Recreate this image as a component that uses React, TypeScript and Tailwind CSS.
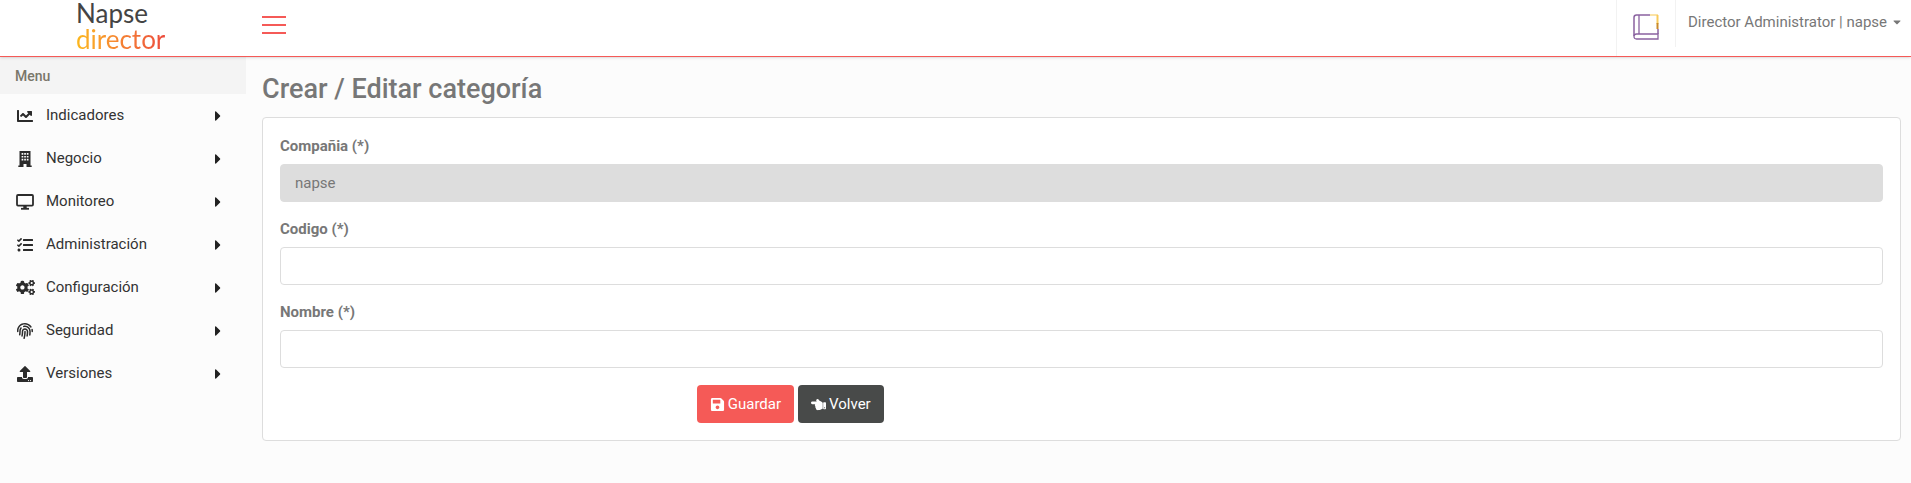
import React from 'react';
import {
    FaCaretDown,
    FaCaretRight,
    FaChartLine,
    FaCogs,
    FaFingerprint,
    FaHandPointLeft,
    FaSave,
    FaTasks,
    FaUpload,
} from 'react-icons/fa';

const BuildingIcon = () => (
    <svg width="14" height="16" viewBox="0 0 14 16" fill="currentColor">
        <path
            fillRule="evenodd"
            d="M1.5 0h11v14.5h1.2V16H8.5v-3h-3v3H.3v-1.5h1.2zM3.6 2v1.7h1.7V2zm2.6 0v1.7h1.7V2zm2.6 0v1.7h1.7V2zM3.6 4.9v1.7h1.7V4.9zm2.6 0v1.7h1.7V4.9zm2.6 0v1.7h1.7V4.9zM3.6 7.8v1.7h1.7V7.8zm2.6 0v1.7h1.7V7.8zm2.6 0v1.7h1.7V7.8z"
        />
    </svg>
);

const MonitorIcon = () => (
    <svg width="18" height="16" viewBox="0 0 18 16" fill="none" stroke="currentColor" strokeWidth="1.8">
        <rect x="1" y="1" width="16" height="10.6" rx="1" />
        <path d="M9 12v2.4" strokeWidth="3.4" />
        <path d="M5 14.8h8" />
    </svg>
);

const BookIcon = () => (
    <svg width="26" height="26" viewBox="0 0 26 26" fill="none">
        <path d="M17 1H3.5Q1 1 1 3.5V22" stroke="#8a62a0" strokeWidth="1.5" />
        <path d="M6 1V20M3.5 20H25V25H3.5Q1 25 1 22.5T3.5 20Z" stroke="#8a62a0" strokeWidth="1.3" />
        <path d="M25 15V20" stroke="#8a62a0" strokeWidth="1.5" />
        <path d="M17 1H25" stroke="#fbe3a6" strokeWidth="2" />
        <path d="M24.5 1V10" stroke="#f8cb5c" strokeWidth="2" />
        <path d="M24.5 9V15" stroke="#c98a2b" strokeWidth="2" />
    </svg>
);

const menuItems = [
    { label: 'Indicadores', icon: <FaChartLine size={16} /> },
    { label: 'Negocio', icon: <BuildingIcon /> },
    { label: 'Monitoreo', icon: <MonitorIcon /> },
    { label: 'Administración', icon: <FaTasks size={16} /> },
    { label: 'Configuración', icon: <FaCogs size={19} /> },
    { label: 'Seguridad', icon: <FaFingerprint size={16} /> },
    { label: 'Versiones', icon: <FaUpload size={16} /> },
];

const Header = () => (
    <header className="relative flex h-[57px] border-b border-[#f55a57] bg-white shadow">
        <a href="#" className="flex w-[246px] shrink-0 flex-col pl-[76px] font-['Lato',sans-serif] text-[26px] leading-[26px]">
            <span className="text-[#444]">Napse</span>
            <span className="w-fit bg-linear-to-r from-[#fcb81c] via-[#f58232] to-[#ec4a3c] bg-clip-text text-transparent">
                director
            </span>
        </a>
        <button type="button" aria-label="Menu" className="ml-4 flex h-[50px] w-6 flex-col justify-center gap-1.5">
            <span className="h-0.5 w-full bg-[#f55a57]" />
            <span className="h-0.5 w-full bg-[#f55a57]" />
            <span className="h-0.5 w-full bg-[#f55a57]" />
        </button>
        <div className="ml-auto flex border-l border-[#f2f2f2]">
            <a href="#" aria-label="Manual" className="flex h-[47px] w-[59px] justify-center border-r border-[#f2f2f2] pt-3.5">
                <BookIcon />
            </a>
            <button type="button" className="flex h-11 items-center gap-1 pr-2 pl-3 text-[15px] text-[#777]">
                Director Administrator | napse
                <FaCaretDown size={12} />
            </button>
        </div>
    </header>
);

const Sidebar = () => (
    <nav className="w-[246px] shrink-0 text-[15px] text-[#333]">
        <h2 className="flex h-[37px] items-center bg-[#f4f4f4] pl-[15px] text-sm font-medium text-[#7a776a]">Menu</h2>
        <ul>
            {menuItems.map((item) => (
                <li key={item.label}>
                    <a href="#" className="flex h-[43px] items-center pr-5 pl-[15px]">
                        <span className="flex w-5 justify-center text-[#2b2b2b]">{item.icon}</span>
                        <span className="ml-[11px]">{item.label}</span>
                        <FaCaretRight size={16} className="ml-auto text-[#222]" />
                    </a>
                </li>
            ))}
        </ul>
    </nav>
);

interface FieldProps {
    id: string;
    label: string;
    value?: string;
    disabled?: boolean;
}

const Field: React.FC<FieldProps> = ({ id, label, value, disabled }) => (
    <div className="mb-[17px]">
        <label htmlFor={id} className="mb-[7px] block text-[15px] leading-[21px] font-bold">
            {label}
        </label>
        <input
            id={id}
            type="text"
            defaultValue={value}
            disabled={disabled}
            className="block h-[38px] w-full rounded border border-[#ddd] bg-white px-3.5 text-[15px] disabled:bg-[#ddd]"
        />
    </div>
);

export default function App() {
    return (
        <div className="min-h-screen bg-[#fcfcfc] font-['Roboto',sans-serif] text-[#777]">
            <Header />
            <div className="flex">
                <Sidebar />
                <main className="min-w-0 flex-1 pr-2.5 pl-4">
                    <h1 className="pt-3.5 pb-2.5 text-[27px] leading-9 font-medium">Crear / Editar categoría</h1>
                    <form className="rounded border border-[#ddd] bg-white px-[17px] pt-[18px] pb-[17px]">
                        <Field id="company" label="Compañia (*)" value="napse" disabled />
                        <Field id="code" label="Codigo (*)" />
                        <Field id="name" label="Nombre (*)" />
                        <div className="ml-[26%] flex gap-1 text-[15px] text-white">
                            <button type="button" className="flex h-[38px] items-center gap-[3px] rounded bg-[#f55a57] px-[13px]">
                                <FaSave size={15} />
                                Guardar
                            </button>
                            <button type="button" className="flex h-[38px] items-center gap-[3px] rounded bg-[#484a49] px-[13px]">
                                <FaHandPointLeft size={15} />
                                Volver
                            </button>
                        </div>
                    </form>
                </main>
            </div>
        </div>
    );
}
